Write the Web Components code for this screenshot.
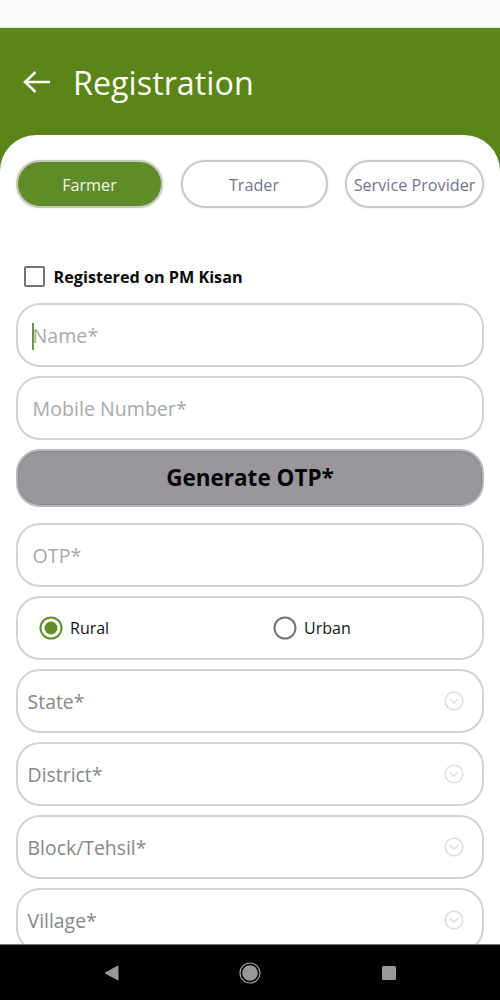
<!DOCTYPE html>
<html>
<head>
<meta charset="utf-8">
<style>
    html, body { margin: 0; padding: 0; background: #fff; }
    body { font-family: "Open Sans", "Liberation Sans", sans-serif; overflow: hidden; }
</style>
</head>
<body>
<reg-app>
    <reg-header slot="header">Registration</reg-header>
    <reg-tabs>
        <reg-tab active style="width:147px">Farmer</reg-tab>
        <reg-tab style="width:147px">Trader</reg-tab>
        <reg-tab style="width:139px">Service Provider</reg-tab>
    </reg-tabs>
    <reg-check>Registered on PM Kisan</reg-check>
    <reg-form>
        <reg-field caret>Name*</reg-field>
        <reg-field>Mobile Number*</reg-field>
        <reg-button>Generate OTP*</reg-button>
        <reg-field>OTP*</reg-field>
        <reg-radios></reg-radios>
        <reg-select>State*</reg-select>
        <reg-select>District*</reg-select>
        <reg-select>Block/Tehsil*</reg-select>
        <reg-select>Village*</reg-select>
    </reg-form>
</reg-app>

<script>
class RegApp extends HTMLElement {
    constructor() {
        super();
        this.attachShadow({ mode: 'open' });
        this.shadowRoot.innerHTML = `
        <style>
            :host { display: flex; flex-direction: column; width: 500px; height: 1000px; overflow: hidden; }
            .status { height: 28px; flex: none; background: #fafafc; border-bottom: 1px solid #e4ecd8; box-sizing: border-box; }
            .green { flex: 1; min-height: 0; background: #5b8518; display: flex; flex-direction: column; }
            .sheet { flex: 1; min-height: 0; overflow: hidden; background: #fff; border-radius: 36px 36px 0 0; padding: 25px 16px 0; }
            .nav { height: 56px; flex: none; background: #020103; border-top: 1px solid #77757a; box-sizing: border-box;
                   display: flex; align-items: center; }
            .nav svg { display: block; }
            .nav .back { margin-left: 103px; }
            .nav .home { margin-left: 120px; }
            .nav .rec { margin-left: 121px; }
        </style>
        <div class="status"></div>
        <div class="green">
            <slot name="header"></slot>
            <div class="sheet"><slot></slot></div>
        </div>
        <div class="nav">
            <svg class="back" width="16" height="16" viewBox="0 0 16 16"><path d="M15 1 L15 15 L2 8 Z" fill="#98979a" stroke="#98979a" stroke-linejoin="round"/></svg>
            <svg class="home" width="22" height="22" viewBox="0 0 22 22"><circle cx="11" cy="11" r="10" fill="none" stroke="#a3a2a5" stroke-width="1.2"/><circle cx="11" cy="11" r="7.8" fill="#98979a"/></svg>
            <svg class="rec" width="14" height="14" viewBox="0 0 14 14"><rect x="0" y="0" width="14" height="14" rx="1.5" fill="#98979a"/></svg>
        </div>`;
    }
}
customElements.define('reg-app', RegApp);

class RegHeader extends HTMLElement {
    constructor() {
        super();
        this.attachShadow({ mode: 'open' });
        this.shadowRoot.innerHTML = `
        <style>
            :host { display: flex; align-items: center; height: 107px; flex: none; box-sizing: border-box; padding: 0 0 0 23px; color: #fbfdf4; }
            svg { display: block; margin-right: 22px; }
            span { font-size: 32.3px; font-weight: 400; line-height: 40px; }
        </style>
        <svg width="28" height="24" viewBox="0 0 28 24"><path d="M27 12 H2 M12.5 2 L2 12 L12.5 22" fill="none" stroke="#fbfdf4" stroke-width="2.6"/></svg>
        <span><slot></slot></span>`;
    }
}
customElements.define('reg-header', RegHeader);

class RegTabs extends HTMLElement {
    constructor() {
        super();
        this.attachShadow({ mode: 'open' });
        this.shadowRoot.innerHTML = `
        <style>
            :host { display: flex; justify-content: space-between; width: 468px; }
        </style>
        <slot></slot>`;
    }
}
customElements.define('reg-tabs', RegTabs);

class RegTab extends HTMLElement {
    constructor() {
        super();
        this.attachShadow({ mode: 'open' });
        this.shadowRoot.innerHTML = `
        <style>
            :host { display: flex; align-items: center; justify-content: center; box-sizing: border-box; height: 48px; padding-top: 1px;
                    border: 2px solid #cbcbcd; border-radius: 24px; background: #fff; color: #77748e;
                    font-size: 16.2px; white-space: nowrap; box-shadow: 0 0 2px #d8d8da; }
            :host([active]) { background: #5f8c28; color: #f3f6e9; border-color: #c3cab9; }
        </style>
        <slot></slot>`;
    }
}
customElements.define('reg-tab', RegTab);

class RegCheck extends HTMLElement {
    constructor() {
        super();
        this.attachShadow({ mode: 'open' });
        this.shadowRoot.innerHTML = `
        <style>
            :host { display: flex; align-items: center; height: 21px; margin: 58px 0 16px 8px; color: #0a0a0a;
                    font-size: 16.2px; font-weight: 700; }
            i { display: block; box-sizing: border-box; width: 21px; height: 21px; margin-right: 8.6px;
                border: 2px solid #747476; border-radius: 2px; }
        </style>
        <i></i><slot></slot>`;
    }
}
customElements.define('reg-check', RegCheck);

class RegForm extends HTMLElement {
    constructor() {
        super();
        this.attachShadow({ mode: 'open' });
        this.shadowRoot.innerHTML = `
        <style>
            :host { display: flex; flex-direction: column; gap: 9px; width: 468px; }
        </style>
        <slot></slot>`;
    }
}
customElements.define('reg-form', RegForm);

class RegField extends HTMLElement {
    constructor() {
        super();
        this.attachShadow({ mode: 'open' });
        this.shadowRoot.innerHTML = `
        <style>
            :host { display: flex; align-items: center; position: relative; box-sizing: border-box; height: 64px; padding-left: 14.6px;
                    border: 2px solid #d2d2d4; border-radius: 24px; background: #fff; color: #a9a9ab; font-size: 19.6px; }
            b { display: none; position: absolute; left: 14px; top: 18px; width: 2px; height: 27px; background: #6f9440; }
            :host([caret]) b { display: block; }
        </style>
        <b></b><slot></slot>`;
    }
}
customElements.define('reg-field', RegField);

class RegButton extends HTMLElement {
    constructor() {
        super();
        this.attachShadow({ mode: 'open' });
        this.shadowRoot.innerHTML = `
        <style>
            :host { display: flex; align-items: center; justify-content: center; box-sizing: border-box; height: 58px; margin-bottom: 7px; padding-bottom: 1px;
                    border: 2px solid #b9b8bb; border-radius: 24px; background: #99979b; color: #060606;
                    font-size: 22.5px; font-weight: 700; box-shadow: inset 0 0 0 1px #8a888c; }
        </style>
        <slot></slot>`;
    }
}
customElements.define('reg-button', RegButton);

class RegRadios extends HTMLElement {
    constructor() {
        super();
        this.attachShadow({ mode: 'open' });
        this.shadowRoot.innerHTML = `
        <style>
            :host { display: grid; grid-template-columns: 234px 1fr; align-items: center; box-sizing: border-box; height: 64px; padding-left: 21px;
                    border: 2px solid #d2d2d4; border-radius: 24px; background: #fff; color: #141414; font-size: 16px; }
            label { display: flex; align-items: center; gap: 7px; }
            svg { display: block; }
        </style>
        <label>
            <svg width="24" height="24" viewBox="0 0 24 24"><circle cx="12" cy="12" r="10.5" fill="none" stroke="#5f8c28" stroke-width="2"/><circle cx="12" cy="12" r="6.5" fill="#5f8c28"/></svg>
            Rural
        </label>
        <label>
            <svg width="24" height="24" viewBox="0 0 24 24"><circle cx="12" cy="12" r="10.5" fill="none" stroke="#747476" stroke-width="2"/></svg>
            Urban
        </label>`;
    }
}
customElements.define('reg-radios', RegRadios);

class RegSelect extends HTMLElement {
    constructor() {
        super();
        this.attachShadow({ mode: 'open' });
        this.shadowRoot.innerHTML = `
        <style>
            :host { display: flex; align-items: center; justify-content: space-between; box-sizing: border-box; height: 64px; padding: 0 18px 0 9.6px; flex: none;
                    border: 2px solid #d2d2d4; border-radius: 24px; background: #fff; color: #87878a; font-size: 19.4px; }
            svg { display: block; }
        </style>
        <slot></slot>
        <svg width="20" height="20" viewBox="0 0 20 20"><circle cx="10" cy="10" r="8.8" fill="none" stroke="#dcdcde" stroke-width="1.5"/><path d="M5.8 8.2 L10 12 L14.2 8.2" fill="none" stroke="#dcdcde" stroke-width="1.5"/></svg>`;
    }
}
customElements.define('reg-select', RegSelect);
</script>
</body>
</html>
